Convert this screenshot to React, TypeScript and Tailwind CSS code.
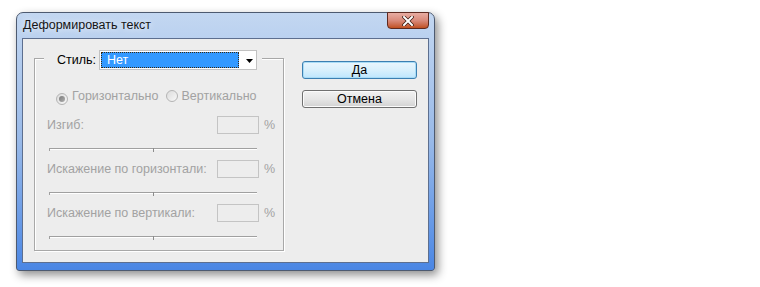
import React from "react";

const font = { fontFamily: '"Liberation Sans", Arial, sans-serif' };

function Radio({ checked }: { checked?: boolean }) {
  return (
    <span className="relative inline-flex h-[12px] w-[12px] items-center justify-center rounded-full border border-[#b4b4b4] bg-gradient-to-br from-[#dcdcdc] to-[#f8f8f8]">
      {checked && <span className="h-[6px] w-[6px] rounded-full bg-gradient-to-br from-[#7a7a7a] to-[#b0b0b0]" />}
    </span>
  );
}

function Slider() {
  return (
    <div className="relative ml-[2px] h-[6px] w-[208px]">
      <div className="h-[1px] w-full bg-[#a0a0a0]" />
      <div className="h-[1px] w-full bg-white" />
      <div className="absolute left-0 top-0 h-[3px] w-[1px] bg-[#a0a0a0]" />
      <div className="absolute left-[104px] top-0 h-[4px] w-[1px] bg-[#8c8c8c]" />
    </div>
  );
}

function ParamBlock({ label }: { label: string }) {
  return (
    <div className="flex h-[44px] flex-col">
      <div className="flex h-[18px] items-center">
        <span className="flex-1 text-[12.5px] leading-none text-[#a2a2a2]">{label}</span>
        <div className="h-[18px] w-[42px] border border-[#c4c4c4] bg-[#ededed]" />
        <span className="ml-[5px] w-[12px] text-[12.5px] leading-none text-[#a2a2a2]">%</span>
      </div>
      <div className="mt-[14px]">
        <Slider />
      </div>
    </div>
  );
}

export default function App() {
  return (
    <div className="h-[287px] w-[760px] overflow-hidden bg-white" style={font}>
      <div className="ml-[16px] mt-[12px] flex h-[259px] w-[419px] flex-col rounded-t-[7px] rounded-b-[3px] border border-[#4d5a70] bg-gradient-to-b from-[#c3d7f1] via-[#98b9e8] to-[#4a86e4] px-[5px] pb-[7px] shadow-[3px_4px_10px_rgba(0,0,0,0.45)]">
        {/* title bar */}
        <div className="flex h-[25px] items-start">
          <span className="ml-[1px] mt-[6px] text-[12.5px] leading-none text-[#151515] [text-shadow:0_0_6px_rgba(255,255,255,0.9)]">
            Деформировать текст
          </span>
          <div className="ml-auto mt-[-1px] flex h-[17px] w-[42px] items-center justify-center rounded-b-[4px] border border-[#5e2a20] bg-gradient-to-b from-[#e7aca2] via-[#d98a7a] to-[#c0501e]">
            <svg width="12" height="10" viewBox="0 0 12 10">
              <path d="M2 1 L10 9 M10 1 L2 9" stroke="#3a1a10" strokeWidth="3.4" strokeLinecap="square" />
              <path d="M2 1 L10 9 M10 1 L2 9" stroke="#ffffff" strokeWidth="2" strokeLinecap="square" />
            </svg>
          </div>
        </div>
        {/* client area */}
        <div className="flex flex-1 border border-[#5d6f8f] bg-[#ededed]">
          {/* group box */}
          <div className="relative ml-[11px] mt-[19px] h-[193px] w-[250px] border border-[#a8a8a8] shadow-[inset_1px_1px_0_#ffffff,1px_1px_0_#ffffff]">
            <div className="absolute left-[9px] top-[-9px] flex h-[20px] items-center bg-[#ededed] pl-[13px] pr-[5px]">
              <span className="text-[12.5px] leading-none text-black">Стиль:</span>
              <div className="ml-[3px] flex h-[20px] w-[158px] items-center border border-[#c2c2c2] bg-white pl-[1px]">
                <div className="flex h-[16px] w-[138px] items-center border border-dotted border-[#3a2a10] bg-[#3399ff] pl-[5px]">
                  <span className="text-[12.5px] leading-none text-white">Нет</span>
                </div>
                <svg className="ml-[7px] mt-[1px]" width="8" height="4" viewBox="0 0 8 4">
                  <path d="M0 0 L7 0 L3.5 4 Z" fill="#000" />
                </svg>
              </div>
            </div>
            <div className="flex flex-col pl-[12px] pr-[7px] pt-[31px]">
              <div className="flex h-[13px] items-center">
                <span className="ml-[9px]"><Radio checked /></span>
                <span className="ml-[4px] text-[12.5px] leading-none text-[#a2a2a2]">Горизонтально</span>
                <span className="ml-[8px]"><Radio /></span>
                <span className="ml-[3px] text-[12.5px] leading-none text-[#a2a2a2]">Вертикально</span>
              </div>
              <div className="mt-[13px] flex flex-col">
                <ParamBlock label="Изгиб:" />
                <ParamBlock label="Искажение по горизонтали:" />
                <ParamBlock label="Искажение по вертикали:" />
              </div>
            </div>
          </div>
          {/* buttons */}
          <div className="ml-[18px] mt-[22px] flex flex-col gap-[11px]">
            <button className="flex h-[18px] w-[115px] items-center justify-center rounded-[3px] border border-[#3c7fb1] bg-gradient-to-b from-[#eaf6fd] via-[#d9f0fc] to-[#bee6fd] text-[12.5px] leading-none text-black shadow-[inset_0_0_0_1px_#a9dcf6]">
              Да
            </button>
            <button className="flex h-[18px] w-[115px] items-center justify-center rounded-[3px] border border-[#707070] bg-gradient-to-b from-[#f2f2f2] via-[#e6e6e6] to-[#d2d2d2] text-[12.5px] leading-none text-black shadow-[inset_0_0_0_1px_#fbfbfb]">
              Отмена
            </button>
          </div>
        </div>
      </div>
    </div>
  );
}
